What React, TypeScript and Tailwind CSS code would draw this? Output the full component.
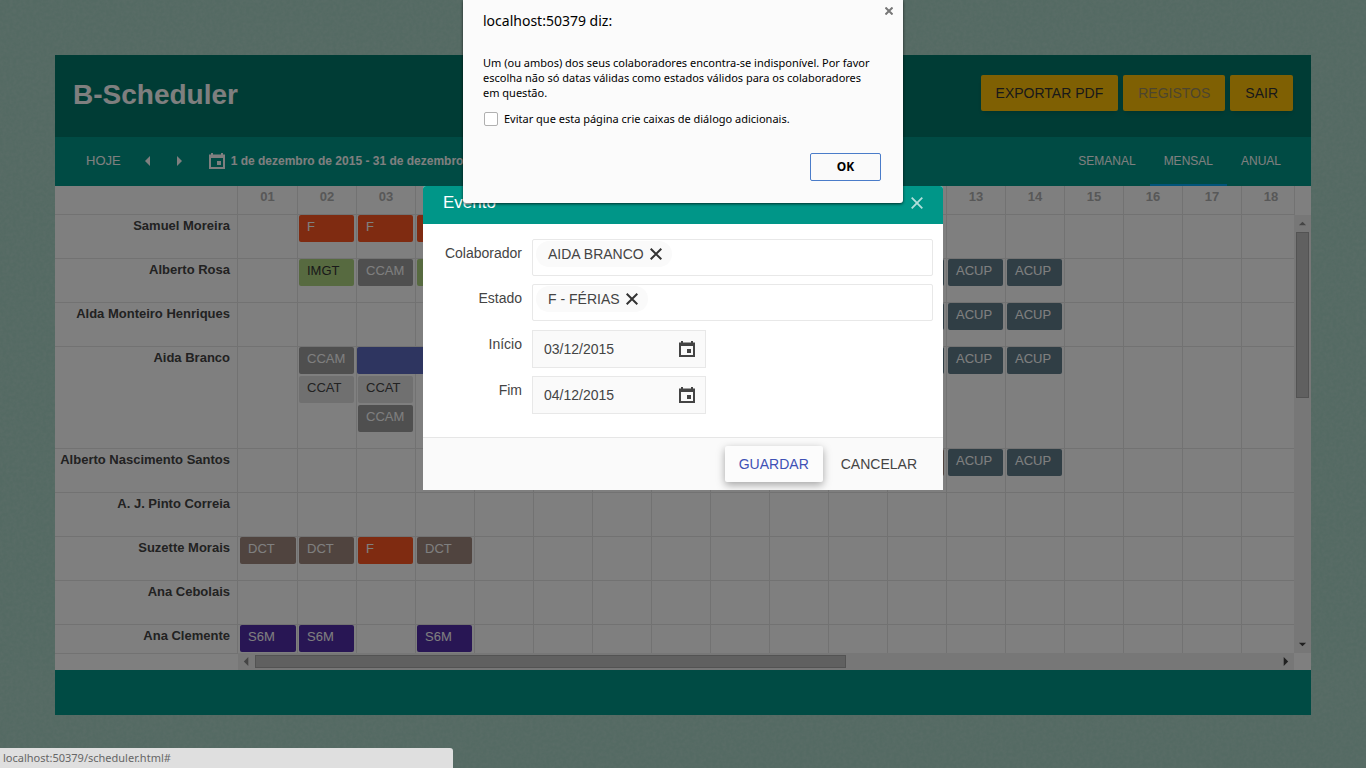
import { useId, type ReactNode } from "react";

type Kind = "F" | "IMGT" | "CCAM" | "CCAT" | "ACUP" | "DCT" | "S6M" | "RANGE";

const kindClass: Record<Kind, string> = {
  F: "bg-[#ff5722] text-white",
  IMGT: "bg-[#aed581] text-[#333333]",
  CCAM: "bg-[#9e9e9e] text-white",
  CCAT: "bg-[#e0e0e0] text-[#444444]",
  ACUP: "bg-[#607d8b] text-white",
  DCT: "bg-[#a1887f] text-white",
  S6M: "bg-[#512da8] text-white",
  RANGE: "bg-[#5c6bc0] text-white",
};

type Row = { name: string; days: Record<number, Kind[]> };

const rows: Row[] = [
  { name: "Samuel Moreira", days: { 2: ["F"], 3: ["F"], 4: ["F"] } },
  {
    name: "Alberto Rosa",
    days: { 2: ["IMGT"], 3: ["CCAM"], 4: ["IMGT"], 12: ["ACUP"], 13: ["ACUP"], 14: ["ACUP"] },
  },
  { name: "Alda Monteiro Henriques", days: { 12: ["ACUP"], 13: ["ACUP"], 14: ["ACUP"] } },
  {
    name: "Aida Branco",
    days: {
      2: ["CCAM", "CCAT"],
      3: ["RANGE", "CCAT", "CCAM"],
      12: ["ACUP"],
      13: ["ACUP"],
      14: ["ACUP"],
    },
  },
  { name: "Alberto Nascimento Santos", days: { 12: ["DCT"], 13: ["ACUP"], 14: ["ACUP"] } },
  { name: "A. J. Pinto Correia", days: {} },
  { name: "Suzette Morais", days: { 1: ["DCT"], 2: ["DCT"], 3: ["F"], 4: ["DCT"] } },
  { name: "Ana Cebolais", days: {} },
  { name: "Ana Clemente", days: { 1: ["S6M"], 2: ["S6M"], 4: ["S6M"] } },
];

const days = Array.from({ length: 18 }, (_, i) => i + 1);

function CalendarIcon({ className }: { className?: string }) {
  return (
    <svg viewBox="0 0 16 16" className={className} fill="currentColor" aria-hidden="true">
      <path
        fillRule="evenodd"
        d="M2 0h2v1.5h8V0h2v1.5h2V16H0V1.5h2zM2 5v9h12V5zM8 8h4v4H8z"
      />
    </svg>
  );
}

function CrossIcon({ className, width }: { className?: string; width: number }) {
  return (
    <svg
      viewBox="0 0 12 12"
      className={className}
      fill="none"
      stroke="currentColor"
      strokeWidth={width}
      aria-hidden="true"
    >
      <path d="M.7.7l10.6 10.6M11.3.7L.7 11.3" />
    </svg>
  );
}

function Arrow({ dir, className }: { dir: "left" | "right" | "up" | "down"; className?: string }) {
  const shapes = {
    left: "M7 0v10L2 5z",
    right: "M3 0v10l5-5z",
    up: "M1 7h8L5 3z",
    down: "M1 3h8L5 7z",
  };
  return (
    <svg viewBox="0 0 10 10" className={className} fill="currentColor" aria-hidden="true">
      <path d={shapes[dir]} />
    </svg>
  );
}

function Backdrop() {
  return (
    <svg className="absolute inset-0 size-full" aria-hidden="true">
      <filter id="grain" x="0" y="0" width="100%" height="100%">
        <feTurbulence type="fractalNoise" baseFrequency="0.3" numOctaves={3} seed={4} />
        <feColorMatrix values="0 0 0 0 1  0 0 0 0 1  0 0 0 0 1  0.22 0 0 0 -0.06" />
      </filter>
      <rect width="100%" height="100%" filter="url(#grain)" />
    </svg>
  );
}

function Scheduler() {
  return (
    <div className="flex min-h-0 flex-1 bg-white">
      <div className="flex min-w-0 flex-1 flex-col">
        <div className="min-h-0 flex-1 overflow-hidden">
          <table className="w-[1246px] table-fixed border-separate border-spacing-0 text-[13px] leading-[22px]">
            <colgroup>
              <col className="w-[183px]" />
              <col className="w-[60px]" />
            </colgroup>
            <thead>
              <tr className="h-[29px]">
                <td className="border-r border-b border-[#e4e4e4]" />
                {days.map((d) => (
                  <th
                    key={d}
                    scope="col"
                    className="border-r border-b border-[#e4e4e4] p-0 pb-1.5 align-middle font-bold text-[#b0b0b0]"
                  >
                    {String(d).padStart(2, "0")}
                  </th>
                ))}
              </tr>
            </thead>
            <tbody>
              {rows.map((row) => (
                <tr key={row.name} className="h-11">
                  <th
                    scope="row"
                    className="border-r border-b border-[#e4e4e4] p-0 pr-[7px] text-right align-top font-bold whitespace-nowrap text-[#444444]"
                  >
                    {row.name}
                  </th>
                  {days.map((d) => (
                    <td
                      key={d}
                      className={
                        d === 1
                          ? "border-r border-b border-[#e4e4e4] p-0 pr-px pb-4 pl-0.5 align-top"
                          : "border-r border-b border-[#e4e4e4] p-0 pr-0.5 pb-4 pl-px align-top"
                      }
                    >
                      <div className="flex flex-col gap-0.5">
                        {(row.days[d] ?? []).map((kind) => (
                          <div
                            key={kind}
                            className={`relative h-[27px] rounded-xs px-2 py-px ${kindClass[kind]} ${
                              kind === "RANGE" ? "-ml-px w-[116px]" : ""
                            }`}
                          >
                            {kind === "RANGE" ? "" : kind}
                          </div>
                        ))}
                      </div>
                    </td>
                  ))}
                </tr>
              ))}
            </tbody>
          </table>
        </div>
        <div className="flex h-[17px] shrink-0">
          <div className="w-[183px] border-t border-[#e4e4e4]" />
          <div className="flex flex-1 items-center bg-[#efefef]">
            <Arrow dir="left" className="ml-1 size-[9px] text-[#8a8a8a]" />
            <div className="ml-1 h-[13px] w-[56%] border border-[#a6a6a6] bg-[#c1c1c1]" />
            <Arrow dir="right" className="mr-1 ml-auto size-[9px] text-[#404040]" />
          </div>
        </div>
      </div>
      <div className="flex w-[17px] flex-col pb-[17px]">
        <div className="h-[29px] border-l border-[#e4e4e4]" />
        <div className="flex flex-1 flex-col items-center bg-[#efefef]">
          <Arrow dir="up" className="mt-1 size-[9px] text-[#8a8a8a]" />
          <div className="mt-1 h-[38%] w-[13px] border border-[#a6a6a6] bg-[#c1c1c1]" />
          <Arrow dir="down" className="mt-auto mb-1 size-[9px] text-[#404040]" />
        </div>
      </div>
    </div>
  );
}

function Chip({ children }: { children: string }) {
  return (
    <span className="flex h-[26px] items-center gap-1.5 rounded-full bg-[#fafafa] pr-2.5 pl-3">
      {children}
      <button type="button" aria-label={`Remover ${children}`} className="text-[#333333]">
        <CrossIcon width={2} className="size-3" />
      </button>
    </span>
  );
}

function Field({ label, htmlFor, children }: { label: string; htmlFor?: string; children: ReactNode }) {
  return (
    <div className="flex gap-2.5">
      <label htmlFor={htmlFor} className="w-[79px] pt-1 text-right">
        {label}
      </label>
      {children}
    </div>
  );
}

function DateField({ label, value }: { label: string; value: string }) {
  const id = useId();
  return (
    <Field label={label} htmlFor={id}>
      <div className="flex h-[38px] w-[174px] items-center border border-[#e8e8e8] bg-[#fafafa] pr-2.5 pl-[11px]">
        <input id={id} defaultValue={value} className="min-w-0 flex-1 bg-transparent outline-none" />
        <button type="button" aria-label={`Escolher data: ${label}`}>
          <CalendarIcon className="size-4 text-[#444444]" />
        </button>
      </div>
    </Field>
  );
}

function EventModal() {
  return (
    <div className="absolute inset-0 flex items-start justify-center bg-black/50 pt-[186px]">
      <section
        role="dialog"
        aria-label="Evento"
        className="w-[520px] overflow-hidden rounded-t-[3px] bg-white text-sm text-[#444444]"
      >
        <header className="flex h-[38px] items-center justify-between bg-[#009688] px-5 pb-1 text-white">
          <h2 className="text-[17px]">Evento</h2>
          <button type="button" aria-label="Fechar">
            <CrossIcon width={1.8} className="size-3 text-[#b2dfdb]" />
          </button>
        </header>
        <div className="flex flex-col gap-[9px] pt-[15px] pr-2.5 pb-[23px] pl-5">
          <div className="flex flex-col gap-2">
            <Field label="Colaborador">
              <div className="flex h-[37px] min-w-0 flex-1 items-start rounded-xs border border-[#e8e8e8] px-[3px] pt-px">
                <Chip>AIDA BRANCO</Chip>
              </div>
            </Field>
            <Field label="Estado">
              <div className="flex h-[37px] min-w-0 flex-1 items-start rounded-xs border border-[#e8e8e8] px-[3px] pt-px">
                <Chip>F - FÉRIAS</Chip>
              </div>
            </Field>
          </div>
          <div className="flex flex-col gap-2">
            <DateField label="Início" value="03/12/2015" />
            <DateField label="Fim" value="04/12/2015" />
          </div>
        </div>
        <footer className="flex items-center justify-end gap-1 border-t border-[#e6e6e6] bg-[#fafafa] py-2 pr-3">
          <button
            type="button"
            className="h-9 rounded-xs bg-[#fcfcfc] px-3.5 text-[#3f51b5] shadow-[0_3px_8px_rgba(0,0,0,0.35)]"
          >
            GUARDAR
          </button>
          <button type="button" className="h-9 px-3.5">
            CANCELAR
          </button>
        </footer>
      </section>
    </div>
  );
}

function AlertDialog() {
  return (
    <section
      role="alertdialog"
      aria-label="localhost:50379 diz:"
      className="absolute top-0 left-1/2 w-[440px] -translate-x-1/2 rounded-b-[3px] bg-[#fbfbfb] px-5 pt-2.5 pb-[22px] font-['Noto_Sans','Open_Sans',sans-serif] text-[11px] leading-[15px] text-black shadow-[0_1px_3px_rgba(0,0,0,0.7)]"
    >
      <button type="button" aria-label="Fechar" className="absolute top-[7px] right-[10px]">
        <CrossIcon width={3} className="size-2 text-[#777777]" />
      </button>
      <h2 className="text-[14px] leading-[22px]">localhost:50379 diz:</h2>
      <p className="mt-[23px] whitespace-nowrap">
        Um (ou ambos) dos seus colaboradores encontra-se indisponível. Por favor
        <br />
        escolha não só datas válidas como estados válidos para os colaboradores
        <br />
        em questão.
      </p>
      <label className="mt-[11px] flex items-center gap-1.5">
        <input
          type="checkbox"
          className="ml-px size-3.5 appearance-none rounded-xs border border-[#b0b0b0] bg-white"
        />
        Evitar que esta página crie caixas de diálogo adicionais.
      </label>
      <div className="mt-[27px] flex justify-end pr-0.5">
        <button
          type="button"
          className="h-7 w-[71px] rounded-xs border border-[#4a7cc9] bg-[#fafafa] text-xs font-bold"
        >
          OK
        </button>
      </div>
    </section>
  );
}

export default function App() {
  return (
    <div className="relative h-screen overflow-hidden bg-[#a8d4c6] font-['Liberation_Sans',Arial,sans-serif]">
      <Backdrop />
      <main className="relative flex h-full flex-col px-[55px] pt-[55px] pb-[53px]">
        <header className="flex h-[82px] shrink-0 items-center justify-between bg-[#00796b] px-[18px] pb-1.5">
          <h1 className="pt-1 text-[28px] font-bold text-white">B-Scheduler</h1>
          <div className="flex gap-[5px] text-sm text-[#333333]">
            <button type="button" className="h-9 rounded-xs bg-[#ffc107] px-[15px] shadow-md">
              EXPORTAR PDF
            </button>
            <button type="button" disabled className="h-9 rounded-xs bg-[#ffc107] px-[15px] text-[#9a8a5c] shadow-md">
              REGISTOS
            </button>
            <button type="button" className="h-9 rounded-xs bg-[#ffc107] px-[15px] shadow-md">
              SAIR
            </button>
          </div>
        </header>
        <nav className="flex h-[49px] shrink-0 items-stretch bg-[#009688] pr-4 pl-[31px] text-[13px] text-white">
          <div className="flex items-center pb-0.5">
            <button type="button">HOJE</button>
            <button type="button" aria-label="Anterior" className="ml-[22px]">
              <Arrow dir="left" className="size-2.5" />
            </button>
            <button type="button" aria-label="Seguinte" className="ml-[21px]">
              <Arrow dir="right" className="size-2.5" />
            </button>
            <a href="#" className="ml-[25px] flex items-center gap-1.5 text-xs font-bold whitespace-nowrap">
              <CalendarIcon className="size-4" />
              1 de dezembro de 2015 - 31 de dezembro de 2015
            </a>
          </div>
          <div className="ml-auto flex text-xs">
            <button type="button" className="border-b-2 border-transparent px-3.5">SEMANAL</button>
            <button type="button" className="border-b-2 border-[#03a9f4] px-3.5">MENSAL</button>
            <button type="button" className="border-b-2 border-transparent px-3.5">ANUAL</button>
          </div>
        </nav>
        <Scheduler />
        <footer className="h-[45px] shrink-0 bg-[#009688]" />
      </main>
      <EventModal />
      <AlertDialog />
      <div className="absolute bottom-0 left-0 h-5 w-[453px] rounded-tr-[3px] bg-[#dfdfdf] px-[3px] font-['Noto_Sans','Open_Sans',sans-serif] text-[11px] leading-5 text-[#666666]">
        localhost:50379/scheduler.html#
      </div>
    </div>
  );
}
